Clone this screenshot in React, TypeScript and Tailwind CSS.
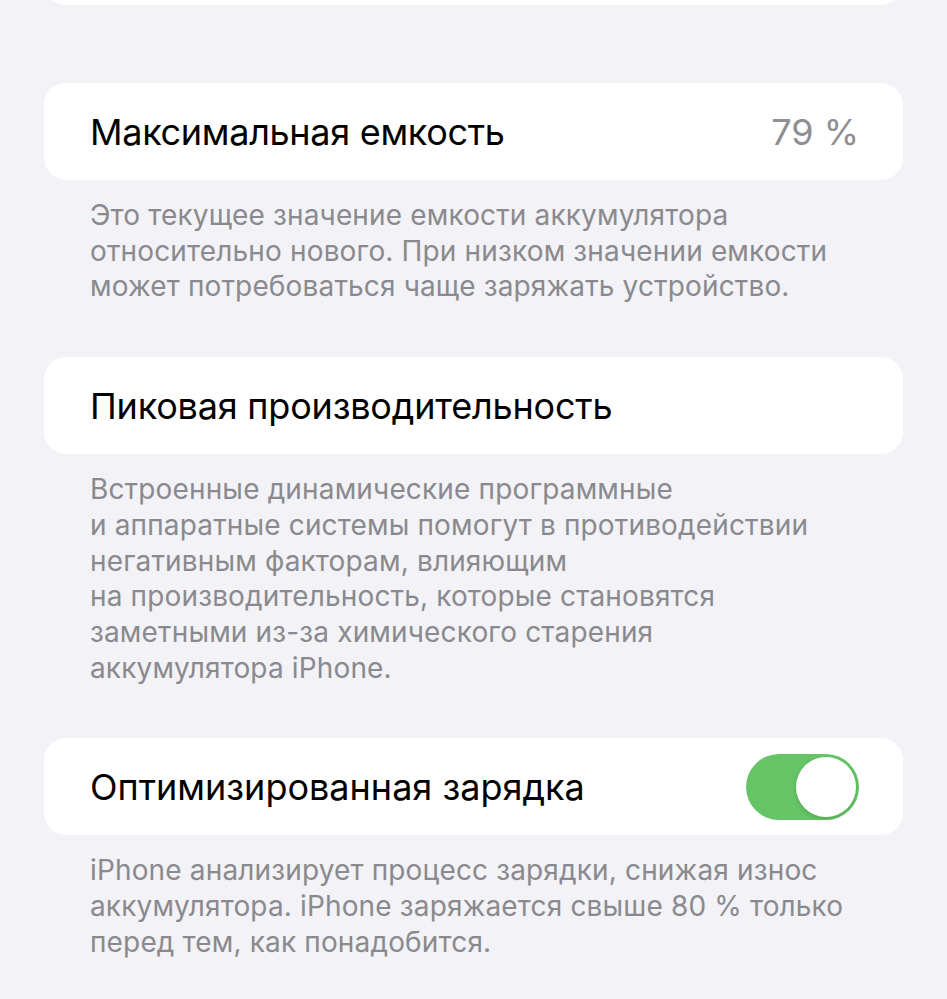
import React from "react";

const font = { fontFamily: "Inter, 'Noto Sans', sans-serif" };

const Card = ({ children }: { children: React.ReactNode }) => (
  <div className="flex h-[97px] items-center justify-between rounded-[22px] bg-white pl-[46px] pr-[44px]">
    {children}
  </div>
);

const Footnote = ({ lines }: { lines: string[] }) => (
  <div className="px-[46px] pt-[18px] text-[28px] leading-[35.7px] tracking-[0.15px] text-[#8a8a8e]">
    {lines.map((l) => (
      <div key={l}>{l}</div>
    ))}
  </div>
);

const Toggle = () => (
  <div className="flex h-[66px] w-[113px] items-center justify-end rounded-full bg-[#65c466] p-[3px]">
    <div className="h-[60px] w-[60px] rounded-full bg-white shadow-[0_2px_4px_rgba(0,0,0,0.15)]" />
  </div>
);

export default function App() {
  return (
    <div className="h-[999px] overflow-hidden bg-[#f2f2f7] px-[44px]" style={font}>
      <div className="-mt-[91px] h-[96px] rounded-[22px] bg-white" />

      <div className="mt-[78px]">
        <Card>
          <span className="text-[36px] tracking-[-0.3px] text-black">Максимальная емкость</span>
          <span className="text-[36px] text-[#8e8e93]">79 %</span>
        </Card>
        <Footnote
          lines={[
            "Это текущее значение емкости аккумулятора",
            "относительно нового. При низком значении емкости",
            "может потребоваться чаще заряжать устройство.",
          ]}
        />
      </div>

      <div className="mt-[52px]">
        <Card>
          <span className="text-[36px] tracking-[-0.2px] text-black">Пиковая производительность</span>
        </Card>
        <Footnote
          lines={[
            "Встроенные динамические программные",
            "и аппаратные системы помогут в противодействии",
            "негативным факторам, влияющим",
            "на производительность, которые становятся",
            "заметными из-за химического старения",
            "аккумулятора iPhone.",
          ]}
        />
      </div>

      <div className="mt-[52px]">
        <Card>
          <span className="text-[36px] text-black">Оптимизированная зарядка</span>
          <Toggle />
        </Card>
        <Footnote
          lines={[
            "iPhone анализирует процесс зарядки, снижая износ",
            "аккумулятора. iPhone заряжается свыше 80 % только",
            "перед тем, как понадобится.",
          ]}
        />
      </div>
    </div>
  );
}
